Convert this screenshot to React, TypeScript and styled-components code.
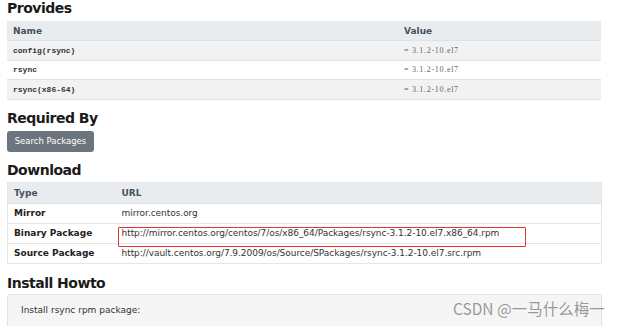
import styled, { createGlobalStyle } from 'styled-components';

const GlobalStyle = createGlobalStyle`
  html, body {
    margin: 0;
    padding: 0;
    background: #ffffff;
  }
  body {
    font-family: "DejaVu Sans", Verdana, sans-serif;
    color: #212529;
    overflow: hidden;
  }
`;

interface Provide {
  name: string;
  value: string;
}

interface DownloadRow {
  type: string;
  url: string;
  marked?: boolean;
}

const provides: Provide[] = [
  { name: 'config(rsync)', value: '= 3.1.2-10.el7' },
  { name: 'rsync', value: '= 3.1.2-10.el7' },
  { name: 'rsync(x86-64)', value: '= 3.1.2-10.el7' },
];

const downloads: DownloadRow[] = [
  { type: 'Mirror', url: 'mirror.centos.org' },
  {
    type: 'Binary Package',
    url: 'http://mirror.centos.org/centos/7/os/x86_64/Packages/rsync-3.1.2-10.el7.x86_64.rpm',
    marked: true,
  },
  {
    type: 'Source Package',
    url: 'http://vault.centos.org/7.9.2009/os/Source/SPackages/rsync-3.1.2-10.el7.src.rpm',
  },
];

function App() {
  return (
    <>
      <GlobalStyle />
      <Page>
        <Heading $top={1} $bottom={5}>Provides</Heading>
        <ProvidesTable>
          <colgroup>
            <Col $width={391} />
            <Col />
          </colgroup>
          <thead>
            <tr>
              <HeadCell>Name</HeadCell>
              <HeadCell>Value</HeadCell>
            </tr>
          </thead>
          <tbody>
            {provides.map((p) => (
              <StripedRow key={p.name}>
                <NameCell>{p.name}</NameCell>
                <ValueCell>{p.value}</ValueCell>
              </StripedRow>
            ))}
          </tbody>
        </ProvidesTable>

        <Heading $top={11} $bottom={5}>Required By</Heading>
        <Button>Search Packages</Button>

        <Heading $top={11} $bottom={4}>Download</Heading>
        <DownloadTable>
          <colgroup>
            <Col $width={108} />
            <Col />
          </colgroup>
          <thead>
            <tr>
              <DlHeadCell>Type</DlHeadCell>
              <DlHeadCell>URL</DlHeadCell>
            </tr>
          </thead>
          <tbody>
            {downloads.map((d) => (
              <tr key={d.type}>
                <TypeCell>{d.type}</TypeCell>
                <UrlCell>
                  <UrlText>
                    {d.url}
                    {d.marked && <Marker />}
                  </UrlText>
                </UrlCell>
              </tr>
            ))}
          </tbody>
        </DownloadTable>

        <Heading $top={12} $bottom={3}>Install Howto</Heading>
        <Well>Install rsync rpm package:</Well>
      </Page>
      <Watermark>CSDN @一马什么梅一</Watermark>
    </>
  );
}

export default App;

const Page = styled.div`
  width: 594px;
  padding-left: 7px;
  display: flex;
  flex-direction: column;
  align-items: flex-start;
`;

const Heading = styled.h2<{ $top: number; $bottom: number }>`
  margin: ${(p) => p.$top}px 0 ${(p) => p.$bottom}px 0;
  font-family: "DejaVu Sans", Verdana, sans-serif;
  font-weight: 700;
  font-size: 14px;
  line-height: 15px;
  letter-spacing: -0.5px;
  color: #1a1a1a;
`;

const Col = styled.col<{ $width?: number }>`
  width: ${(p) => (p.$width ? `${p.$width}px` : 'auto')};
`;

const ProvidesTable = styled.table`
  width: 594px;
  table-layout: fixed;
  border-collapse: collapse;
`;

const HeadCell = styled.th`
  height: 19px;
  padding: 0 6px;
  text-align: left;
  font-family: "DejaVu Sans", Verdana, sans-serif;
  font-size: 9px;
  font-weight: 700;
  color: #495057;
  background: #e9ecef;
  border-bottom: 1px solid #dee2e6;
`;

const StripedRow = styled.tr`
  &:nth-child(odd) {
    background: #f2f2f2;
  }
  &:nth-child(even) {
    background: #ffffff;
  }
`;

const NameCell = styled.td`
  height: 18.5px;
  padding: 0 6px;
  font-family: "Liberation Mono", "DejaVu Sans Mono", monospace;
  font-size: 8px;
  font-weight: 700;
  color: #333333;
  border-bottom: 1px solid #e3e3e3;
`;

const ValueCell = styled(NameCell)`
  font-family: "Liberation Serif", "DejaVu Serif", serif;
  font-size: 8px;
  font-weight: 400;
  letter-spacing: 0.7px;
  color: #666666;
`;

const Button = styled.button`
  width: 87px;
  height: 21px;
  padding: 0;
  border: none;
  border-radius: 3px;
  background: #6c757d;
  color: #ffffff;
  font-family: "DejaVu Sans", Verdana, sans-serif;
  font-size: 8.5px;
  cursor: pointer;
`;

const DownloadTable = styled.table`
  width: 595px;
  table-layout: fixed;
  border-collapse: collapse;
  border: 1px solid #e6e6e6;
`;

const DlHeadCell = styled(HeadCell)`
  height: 20px;
`;

const TypeCell = styled.td`
  height: 19px;
  padding: 0 6px;
  font-family: "DejaVu Sans", Verdana, sans-serif;
  font-size: 9px;
  font-weight: 700;
  color: #222222;
  border-top: 1px solid #e6e6e6;
  white-space: nowrap;
`;

const UrlCell = styled.td`
  height: 19px;
  padding: 0 6px;
  font-family: "DejaVu Sans", Verdana, sans-serif;
  font-size: 9px;
  color: #333333;
  border-top: 1px solid #e6e6e6;
`;

const UrlText = styled.span`
  position: relative;
  white-space: nowrap;
  letter-spacing: -0.05px;
`;

const Marker = styled.span`
  position: absolute;
  left: -4px;
  top: -1px;
  width: 408px;
  height: 20px;
  border: 1.5px solid #e5322d;
  border-radius: 1px;
  box-sizing: border-box;
`;

const Well = styled.div`
  box-sizing: border-box;
  width: 595px;
  height: 60px;
  padding: 10px 13px;
  background: #f5f5f5;
  border: 1px solid #e3e3e3;
  border-radius: 3px;
  font-family: "DejaVu Sans", Verdana, sans-serif;
  font-size: 9px;
  color: #333333;
`;

const Watermark = styled.div`
  position: absolute;
  left: 453px;
  top: 297px;
  font-family: "Noto Sans CJK SC", "Noto Sans", sans-serif;
  font-size: 15.5px;
  font-weight: 400;
  color: rgba(110, 110, 110, 0.7);
  white-space: nowrap;
`;
